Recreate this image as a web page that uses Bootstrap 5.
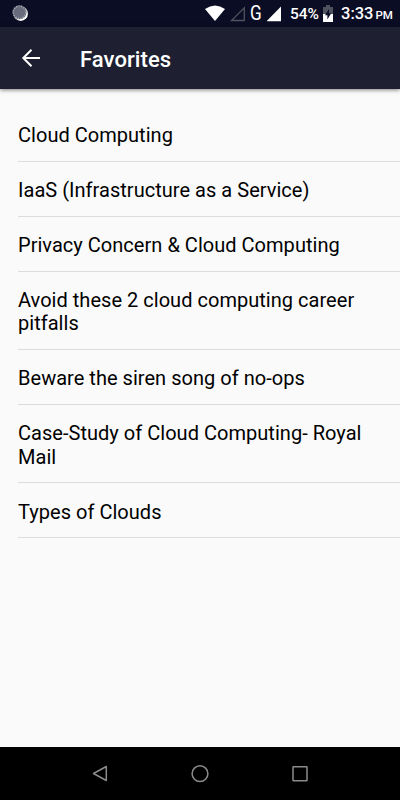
<!DOCTYPE html>
<html lang="en">
<head>
<meta charset="utf-8">
<meta name="viewport" content="width=device-width, initial-scale=1">
<title>Favorites</title>
<link href="https://cdn.jsdelivr.net/npm/bootstrap@5.3.0/dist/css/bootstrap.min.css" rel="stylesheet">
<style>
body{font-family:Roboto,"Noto Sans",sans-serif;background:#fafafa;color:#000;height:800px;overflow:hidden}
.status{height:27px;background:#0b0d24;color:#fff;padding-left:12px}
.status svg,.appbar svg,.softkeys svg{display:block;flex:none}
.status-right{width:195px;height:27px}
.net{font-size:19.5px;line-height:28px;width:13px;margin-left:3px;padding-top:1px;transform:scaleX(.88);transform-origin:left}
.pct{font-size:15.5px;font-weight:500;line-height:29px;width:33px;margin-left:7px;padding-top:2px;white-space:nowrap}
.clock{font-size:16.5px;font-weight:500;line-height:28px;margin-left:8px;padding-top:2px;white-space:nowrap}
.clock small{font-size:11.5px;margin-left:2px}
.appbar{height:62px;background:#1e2031;color:#fff;padding:0 0 0 19px;box-shadow:0 1px 4px rgba(0,0,0,.5);z-index:1}
.appbar h1{font-size:22px;font-weight:500;line-height:26px;margin:3px 0 0 37px;letter-spacing:.08px}
.topics{padding:18px 0 0 18px}
.topics .list-group-item{background:transparent;color:#000;border-color:#dcdcdc;font-size:20px;line-height:23.2px;padding:17.2px 18px 13.6px 0;letter-spacing:.03px}
.topics .list-group-item:last-child{border-bottom:1px solid #dcdcdc}
.softkeys{height:53px;background:#000}
</style>
<script src="https://cdn.jsdelivr.net/npm/bootstrap@5.3.0/dist/js/bootstrap.bundle.min.js"></script>
</head>
<body class="d-flex flex-column">
<div class="status d-flex align-items-center justify-content-between flex-shrink-0">
  <svg width="17" height="17" viewBox="0 0 17 17"><circle cx="8.7" cy="8.7" r="7.2" fill="#fff"/><circle cx="7.5" cy="7.3" r="7" fill="#686b7b"/><circle cx="7.5" cy="7.3" r="6.2" fill="none" stroke="#a9abb5" stroke-width="1.4" stroke-dasharray="1.2 1.3"/></svg>
  <div class="status-right d-flex align-items-center">
    <svg width="20" height="17" viewBox="0 0 20 17"><path d="M0 4Q10-3 20 4L10 16Z" fill="#fff"/></svg>
    <svg class="ms-1" width="18" height="16" viewBox="0 0 18 16"><path d="M2.5 14.5H15.3V1.7Z" fill="none" stroke="#50525f" stroke-width="1.3"/></svg>
    <span class="net">G</span>
    <svg class="ms-1" width="16" height="16" viewBox="0 0 16 16"><path d="M-1 15.2H13.5V0.5Z" fill="#fff" transform="translate(.5)"/></svg>
    <span class="pct">54%</span>
    <svg width="10" height="17" viewBox="0 0 10 17"><path d="M0 2H3V0H7V2H10V17H0Z" fill="#50525f"/><path d="M0 9H10V17H0Z" fill="#fff"/><path d="M6 4L2 10.3H4.4V14.5L8.2 8.2H6Z" fill="#0b0d24"/></svg>
    <span class="clock">3:33<small>PM</small></span>
  </div>
</div>
<header class="appbar d-flex align-items-center flex-shrink-0 position-relative">
  <svg width="24" height="24" viewBox="0 0 24 24"><path d="M21 12H4.5M12.5 3.8L4.3 12L12.5 20.2" fill="none" stroke="#fff" stroke-width="2"/></svg>
  <h1>Favorites</h1>
</header>
<main class="topics flex-grow-1">
  <ul class="list-group list-group-flush">
    <li class="list-group-item">Cloud Computing</li>
    <li class="list-group-item">IaaS (Infrastructure as a Service)</li>
    <li class="list-group-item">Privacy Concern &amp; Cloud Computing</li>
    <li class="list-group-item">Avoid these 2 cloud computing career pitfalls</li>
    <li class="list-group-item">Beware the siren song of no-ops</li>
    <li class="list-group-item">Case-Study of Cloud Computing- Royal Mail</li>
    <li class="list-group-item">Types of Clouds</li>
  </ul>
</main>
<nav class="softkeys d-flex justify-content-center align-items-center flex-shrink-0" aria-label="System">
  <svg width="220" height="20" viewBox="0 0 220 20" fill="none" stroke="#8b8b8b" stroke-width="1.5"><path d="M16.3 2.5V16.5L3.5 9.5Z" stroke-linejoin="round"/><circle cx="110" cy="9.7" r="7.9"/><rect x="203" y="2.7" width="14" height="14" rx=".5"/></svg>
</nav>
</body>
</html>
